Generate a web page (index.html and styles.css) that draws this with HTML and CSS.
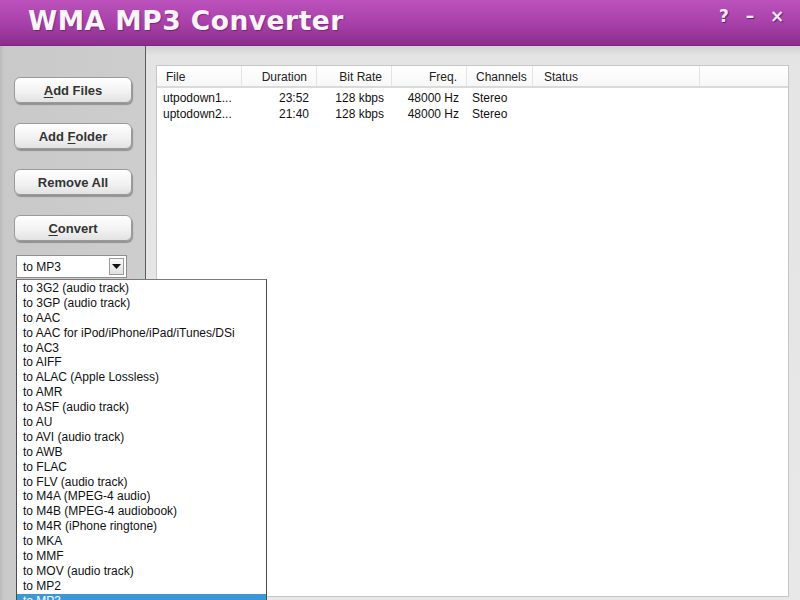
FILE: index.html
```html
<!DOCTYPE html>
<html>
<head>
<meta charset="utf-8">
<link rel="stylesheet" href="styles.css">
</head>
<body>
<div class="app">
  <div class="titlebar">
    <div class="title">WMA MP3 Converter</div>
    <div class="winbtns"><span class="wb">?</span><span class="wb min">–</span><span class="wb">×</span></div>
  </div>
  <div class="main">
    <div class="sidebar">
      <button class="btn"><u>A</u>dd Files</button>
      <button class="btn">Add <u>F</u>older</button>
      <button class="btn">Remove All</button>
      <button class="btn"><u>C</u>onvert</button>
      <div class="combo">
        <span class="combo-text">to MP3</span>
        <span class="combo-arrow"><svg width="9" height="5" viewBox="0 0 9 5"><path d="M0 0h9L4.5 5z" fill="#111"/></svg></span>
      </div>
    </div>
    <div class="content">
      <div class="list">
        <div class="row head">
          <div class="c c1">File</div>
          <div class="c c2 r">Duration</div>
          <div class="c c3 r">Bit Rate</div>
          <div class="c c4 r">Freq.</div>
          <div class="c c5">Channels</div>
          <div class="c c6">Status</div>
          <div class="c c7"></div>
        </div>
        <div class="body">
          <div class="row item">
            <div class="c c1">utpodown1...</div>
            <div class="c c2 r">23:52</div>
            <div class="c c3 r">128 kbps</div>
            <div class="c c4 r">48000 Hz</div>
            <div class="c c5">Stereo</div>
            <div class="c c6"></div>
            <div class="c c7"></div>
          </div>
          <div class="row item">
            <div class="c c1">uptodown2...</div>
            <div class="c c2 r">21:40</div>
            <div class="c c3 r">128 kbps</div>
            <div class="c c4 r">48000 Hz</div>
            <div class="c c5">Stereo</div>
            <div class="c c6"></div>
            <div class="c c7"></div>
          </div>
        </div>
      </div>
    </div>
  </div>
  <div class="dropdown">
    <div class="opt">to 3G2 (audio track)</div>
    <div class="opt">to 3GP (audio track)</div>
    <div class="opt">to AAC</div>
    <div class="opt">to AAC for iPod/iPhone/iPad/iTunes/DSi</div>
    <div class="opt">to AC3</div>
    <div class="opt">to AIFF</div>
    <div class="opt">to ALAC (Apple Lossless)</div>
    <div class="opt">to AMR</div>
    <div class="opt">to ASF (audio track)</div>
    <div class="opt">to AU</div>
    <div class="opt">to AVI (audio track)</div>
    <div class="opt">to AWB</div>
    <div class="opt">to FLAC</div>
    <div class="opt">to FLV (audio track)</div>
    <div class="opt">to M4A (MPEG-4 audio)</div>
    <div class="opt">to M4B (MPEG-4 audiobook)</div>
    <div class="opt">to M4R (iPhone ringtone)</div>
    <div class="opt">to MKA</div>
    <div class="opt">to MMF</div>
    <div class="opt">to MOV (audio track)</div>
    <div class="opt">to MP2</div>
    <div class="opt sel">to MP3</div>
  </div>
</div>
</body>
</html>
```
FILE: styles.css
```css
html, body {
  margin: 0;
  padding: 0;
  width: 800px;
  height: 600px;
  overflow: hidden;
  background: #e6e6e6;
}
.app {
  position: relative;
  width: 800px;
  height: 600px;
  display: flex;
  flex-direction: column;
  font-family: "Liberation Sans", Arial, sans-serif;
}
.titlebar {
  height: 46px;
  flex: none;
  background: linear-gradient(#bd52bd 0%, #a640a8 55%, #8a2d8c 100%);
  display: flex;
  align-items: flex-start;
  justify-content: space-between;
  box-sizing: border-box;
  border-bottom: 1px solid #7a2a7c;
}
.title {
  font-family: "DejaVu Sans", Verdana, sans-serif;
  font-weight: bold;
  font-size: 26.5px;
  color: #fbf4fb;
  margin: 5px 0 0 28px;
  letter-spacing: 0.5px;
  text-shadow: 1px 1px 1px rgba(70, 10, 70, 0.45);
}
.winbtns {
  display: flex;
  gap: 14px;
  margin: 6px 18px 0 0;
}
.wb {
  font-family: "DejaVu Sans", Verdana, sans-serif;
  font-weight: bold;
  font-size: 17px;
  color: #f6eef6;
  width: 12px;
  text-align: center;
  text-shadow: 1px 1px 1px rgba(60, 10, 60, 0.6);
}
.main {
  flex: 1;
  display: flex;
  min-height: 0;
}
.sidebar {
  width: 146px;
  flex: none;
  box-sizing: border-box;
  border-right: 1px solid #5c5c5c;
  background: linear-gradient(90deg, #b9b9b9 0px, #c9c9c9 4px, #cdcdcd 100%);
  padding: 31px 0 0 14px;
  display: flex;
  flex-direction: column;
  align-items: flex-start;
}
.btn {
  width: 118px;
  height: 26px;
  margin-bottom: 20px;
  border: 1px solid #9a9a9a;
  border-radius: 6px;
  background: linear-gradient(#ffffff, #f1f1f1 60%, #e2e2e2);
  box-shadow: 1px 2px 1px rgba(0, 0, 0, 0.28);
  font-family: "Liberation Sans", Arial, sans-serif;
  font-weight: bold;
  font-size: 13px;
  color: #333;
  padding: 0;
}
.btn u {
  text-decoration-thickness: 1px;
  text-underline-offset: 2px;
}
.combo {
  margin: -6px 0 0 2px;
  width: 111px;
  height: 23px;
  box-sizing: border-box;
  border: 1px solid #8f8f8f;
  background: #fff;
  display: flex;
  align-items: center;
  justify-content: space-between;
}
.combo-text {
  font-size: 12px;
  color: #111;
  padding-left: 6px;
}
.combo-arrow {
  width: 15px;
  height: 17px;
  margin-right: 2px;
  box-sizing: border-box;
  border: 1px solid #9a9a9a;
  background: linear-gradient(#fafafa, #e0e0e0);
  display: flex;
  align-items: center;
  justify-content: center;
}
.content {
  flex: 1;
  background: linear-gradient(#d2d2d2 0px, #e4e4e4 10px, #e8e8e8 100%);
  padding: 19px 11px 3px 10px;
  display: flex;
  min-width: 0;
}
.list {
  flex: 1;
  background: #fff;
  border: 1px solid #c6c6c6;
  display: flex;
  flex-direction: column;
}
.row {
  display: grid;
  grid-template-columns: 85px 75px 75px 75px 66px 167px 1fr;
}
.head {
  height: 20px;
  border-bottom: 2px solid #dadada;
  background: linear-gradient(#ffffff, #f7f7f7);
}
.head .c {
  border-right: 1px solid #e4e4e4;
  font-size: 12px;
  color: #222;
  line-height: 22px;
  padding: 0 9px;
}
.head .c6 { padding-left: 11px; }
.head .c7 { border-right: none; }
.c {
  white-space: nowrap;
  overflow: hidden;
}
.r { text-align: right; }
.body {
  padding-top: 2px;
}
.item .c {
  font-size: 12px;
  color: #111;
  line-height: 16px;
  padding: 0 8px;
}
.item .c1 { padding-left: 6px; }
.item .c5 { padding-left: 5px; }
.dropdown {
  position: absolute;
  left: 16px;
  top: 279px;
  width: 251px;
  height: 330px;
  box-sizing: border-box;
  border: 1px solid #4a4a4a;
  border-top-color: #7a7a7a;
  background: #fff;
  padding-top: 1px;
}
.opt {
  height: 14.9px;
  line-height: 14.9px;
  font-size: 12px;
  color: #111;
  padding-left: 6px;
  white-space: nowrap;
}
.opt.sel {
  background: #3a98d8;
  color: #fff;
}
```
